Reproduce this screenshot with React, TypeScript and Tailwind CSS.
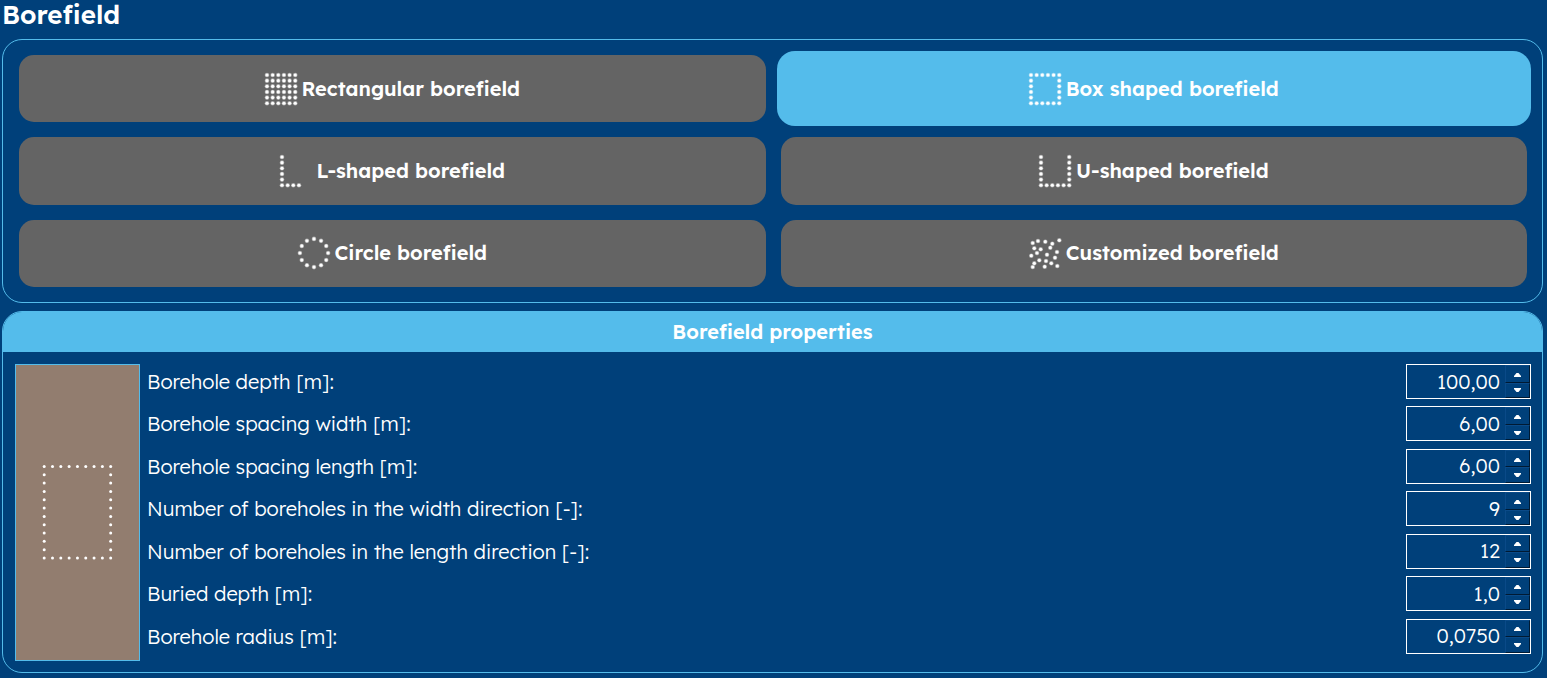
import { useState } from "react";

type Point = [number, number];

const STEPS = [0, 1, 2, 3, 4, 5];
const at = (i: number) => 2 + i * 5.65;

const fullGrid: Point[] = STEPS.flatMap((c) => STEPS.map((r): Point => [at(c), at(r)]));
const last = at(5);

const shapes: Record<string, Point[]> = {
  rectangle: fullGrid,
  box: fullGrid.filter(([x, y]) => x === 2 || y === 2 || x === last || y === last),
  l: fullGrid.filter(([x, y]) => x === 2 || (y === last && x < at(3) + 1)),
  u: fullGrid.filter(([x, y]) => x === 2 || x === last || y === last),
  circle: Array.from({ length: 12 }, (_, i): Point => [
    16 + 14.1 * Math.cos((i * Math.PI) / 6),
    16 + 14.1 * Math.sin((i * Math.PI) / 6),
  ]),
  custom: [
    [30.3, 3.3], [9, 4], [16.3, 4.7], [3.7, 6], [23.3, 6.7], [21.3, 10.7], [5.3, 11.3],
    [11.7, 12.3], [8, 16], [28, 15], [2.3, 18.7], [18, 17.7], [26, 20.7], [10.3, 23.3],
    [17, 24], [5.3, 26.3], [22.3, 26.3], [3.7, 30], [15.7, 29.7], [28.3, 29],
  ],
};

const options = [
  { id: "rectangle", label: "Rectangular borefield" },
  { id: "box", label: "Box shaped borefield" },
  { id: "l", label: "L-shaped borefield" },
  { id: "u", label: "U-shaped borefield" },
  { id: "circle", label: "Circle borefield" },
  { id: "custom", label: "Customized borefield" },
];

const fields = [
  { id: "depth", label: "Borehole depth [m]:", value: "100,00", step: 1 },
  { id: "spacing-width", label: "Borehole spacing width [m]:", value: "6,00", step: 1 },
  { id: "spacing-length", label: "Borehole spacing length [m]:", value: "6,00", step: 1 },
  { id: "count-width", label: "Number of boreholes in the width direction [-]:", value: "9", step: 1 },
  { id: "count-length", label: "Number of boreholes in the length direction [-]:", value: "12", step: 1 },
  { id: "buried", label: "Buried depth [m]:", value: "1,0", step: 0.1 },
  { id: "radius", label: "Borehole radius [m]:", value: "0,0750", step: 0.001 },
];

function DotIcon({ points }: { points: Point[] }) {
  return (
    <svg viewBox="0 0 32 32" className="size-8 shrink-0 overflow-visible" fill="white" aria-hidden="true">
      {points.map(([x, y], i) => (
        <g key={i}>
          <circle cx={x} cy={y} r="2.3" opacity="0.45" />
          <circle cx={x} cy={y} r="1.6" />
        </g>
      ))}
    </svg>
  );
}

function FieldPreview() {
  const cols = 9;
  const rows = 12;
  const dots: Point[] = [];
  for (let c = 0; c < cols; c++) {
    for (let r = 0; r < rows; r++) {
      if (c === 0 || r === 0 || c === cols - 1 || r === rows - 1) {
        dots.push([28.2 + c * 8.31, 101.4 + r * 8.33]);
      }
    }
  }
  return (
    <div className="shrink-0 border border-[#54bceb] bg-[#927d6f]">
      <svg viewBox="0 0 123 295" className="h-[295px] w-[123px]" fill="white" role="img" aria-label="Borefield layout">
        {dots.map(([x, y], i) => (
          <circle key={i} cx={x} cy={y} r="1.5" />
        ))}
      </svg>
    </div>
  );
}

function SpinBox({ id, initial, step }: { id: string; initial: string; step: number }) {
  const [value, setValue] = useState(initial);
  const decimals = initial.split(",")[1]?.length ?? 0;
  const change = (delta: number) => {
    const next = Math.max(0, parseFloat(value.replace(",", ".")) + delta);
    setValue(next.toFixed(decimals).replace(".", ","));
  };
  return (
    <div className="flex h-[35px] w-[125px] border border-white">
      <input
        id={id}
        type="text"
        inputMode="decimal"
        value={value}
        onChange={(e) => setValue(e.target.value)}
        className="min-w-0 flex-1 bg-transparent pr-[5px] text-right font-light text-white outline-none"
      />
      <div className="flex w-[25px] flex-col">
        <button
          type="button"
          aria-label="Increase"
          onClick={() => change(step)}
          className="flex flex-1 items-center justify-center border border-t-[#0a4a88] border-r-[#001a33] border-b-[#001a33] border-l-[#0a4a88] pt-0.5"
        >
          <svg viewBox="0 0 7 4" className="h-1 w-[7px]" fill="white" aria-hidden="true">
            <path d="M2.5 0h2l2.5 3v1H0V3z" />
          </svg>
        </button>
        <button
          type="button"
          aria-label="Decrease"
          onClick={() => change(-step)}
          className="flex flex-1 items-center justify-center border border-t-[#0a4a88] border-r-[#001a33] border-b-[#001a33] border-l-[#0a4a88]"
        >
          <svg viewBox="0 0 7 4" className="h-1 w-[7px]" fill="white" aria-hidden="true">
            <path d="M2.5 4h2L7 1V0H0v1z" />
          </svg>
        </button>
      </div>
    </div>
  );
}

export default function App() {
  const [selected, setSelected] = useState("box");
  return (
    <main className="min-h-screen bg-[#00407a] pr-1 pb-1 pl-0.5 font-['Lexend','Inter',sans-serif] text-[20px] text-white">
      <h1 className="pb-2.5 text-[26px] leading-[29px] font-semibold">Borefield</h1>

      <section className="grid min-h-[264px] auto-rows-fr grid-cols-2 gap-[15px] rounded-[20px] border border-[#54bceb] py-[15px] pr-[15px] pl-4">
        {options.map((o) => (
          <button
            key={o.id}
            type="button"
            aria-pressed={selected === o.id}
            onClick={() => setSelected(o.id)}
            className={
              selected === o.id
                ? "-m-1 flex items-center justify-center gap-[5px] rounded-[18px] bg-[#54bceb] font-semibold"
                : "flex items-center justify-center gap-[5px] rounded-[15px] bg-[#646464] font-semibold"
            }
          >
            <DotIcon points={shapes[o.id]} />
            {o.label}
          </button>
        ))}
      </section>

      <section className="mt-2 overflow-hidden rounded-[20px] border border-[#54bceb]">
        <h2 className="bg-[#54bceb] text-center leading-10 font-semibold">Borefield properties</h2>
        <div className="flex gap-[7px] pt-3 pr-[11px] pb-[11px] pl-3">
          <FieldPreview />
          <div className="grid flex-1 auto-rows-fr">
            {fields.map((f) => (
              <div key={f.id} className="flex items-start justify-between">
                <label htmlFor={f.id} className="leading-[35px] font-light">
                  {f.label}
                </label>
                <SpinBox id={f.id} initial={f.value} step={f.step} />
              </div>
            ))}
          </div>
        </div>
      </section>
    </main>
  );
}
